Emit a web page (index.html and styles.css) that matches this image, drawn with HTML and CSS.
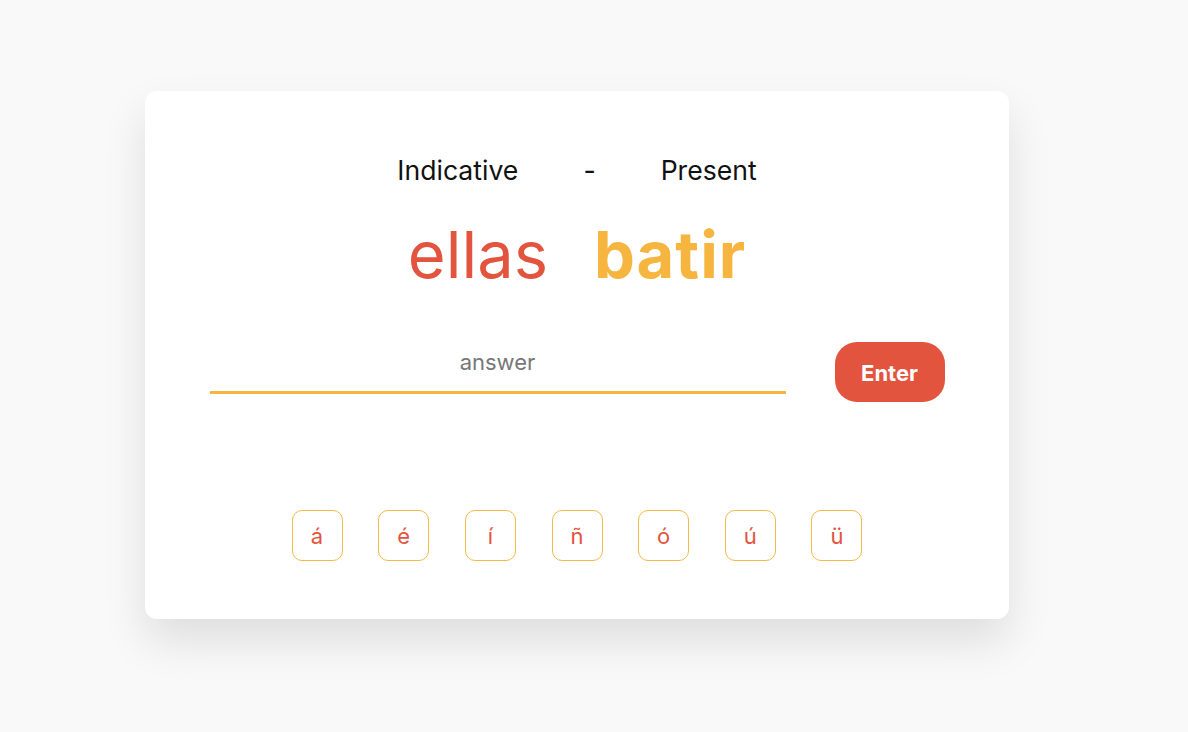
FILE: index.html
```html
<!DOCTYPE html>
<html lang="en">
<head>
<meta charset="utf-8">
<title>Conjugation practice</title>
<link rel="stylesheet" href="styles.css">
</head>
<body>
  <main class="card">
    <div class="tense">
      <span>Indicative</span>
      <span>-</span>
      <span>Present</span>
    </div>
    <div class="prompt">
      <span class="pronoun">ellas</span>
      <span class="verb">batir</span>
    </div>
    <div class="answer-row">
      <input class="answer" type="text" placeholder="answer">
      <button class="enter">Enter</button>
    </div>
    <div class="accents">
      <button class="accent">á</button>
      <button class="accent">é</button>
      <button class="accent">í</button>
      <button class="accent">ñ</button>
      <button class="accent">ó</button>
      <button class="accent">ú</button>
      <button class="accent">ü</button>
    </div>
  </main>
</body>
</html>
```
FILE: styles.css
```css
html, body {
  margin: 0;
  padding: 0;
}
body {
  background: #f9f9f9;
  font-family: "Inter", "Noto Sans", sans-serif;
  min-height: 732px;
  overflow: hidden;
}
.card {
  box-sizing: border-box;
  width: 864px;
  height: 528px;
  margin: 91px 0 0 145px;
  background: #ffffff;
  border-radius: 12px;
  box-shadow: 0 22px 45px rgba(0, 0, 0, 0.11);
  display: flex;
  flex-direction: column;
  align-items: center;
  padding-top: 63px;
}
.tense {
  display: flex;
  gap: 65px;
  font-size: 26.6px;
  line-height: 32px;
  color: #111;
}
.prompt {
  margin-top: 28px;
  display: flex;
  gap: 46px;
  font-size: 65px;
  line-height: 82px;
}
.pronoun {
  color: #e3543f;
}
.verb {
  color: #f5b53f;
  font-weight: 700;
  letter-spacing: 1px;
}
.answer-row {
  margin-top: 46px;
  display: flex;
  align-items: flex-start;
  gap: 49px;
}
.answer {
  box-sizing: border-box;
  width: 576px;
  height: 52px;
  padding: 0 0 9px;
  border: none;
  border-bottom: 3px solid #f5b53f;
  outline: none;
  font-family: inherit;
  font-size: 22px;
  text-align: center;
  color: #333;
  background: transparent;
}
.answer::placeholder {
  color: #777;
}
.enter {
  width: 110px;
  height: 60px;
  padding: 1px 0 0;
  border: none;
  border-radius: 22px;
  background: #e3543f;
  color: #fff;
  font-family: inherit;
  font-size: 22px;
  font-weight: 700;
  cursor: pointer;
}
.accents {
  margin-top: 108px;
  display: flex;
  gap: 35.67px;
}
.accent {
  box-sizing: border-box;
  width: 51px;
  height: 51px;
  border: 1px solid #f5b94a;
  border-radius: 10px;
  background: #fff;
  color: #e3543f;
  font-family: inherit;
  font-size: 22px;
  padding: 0;
  cursor: pointer;
}
```
